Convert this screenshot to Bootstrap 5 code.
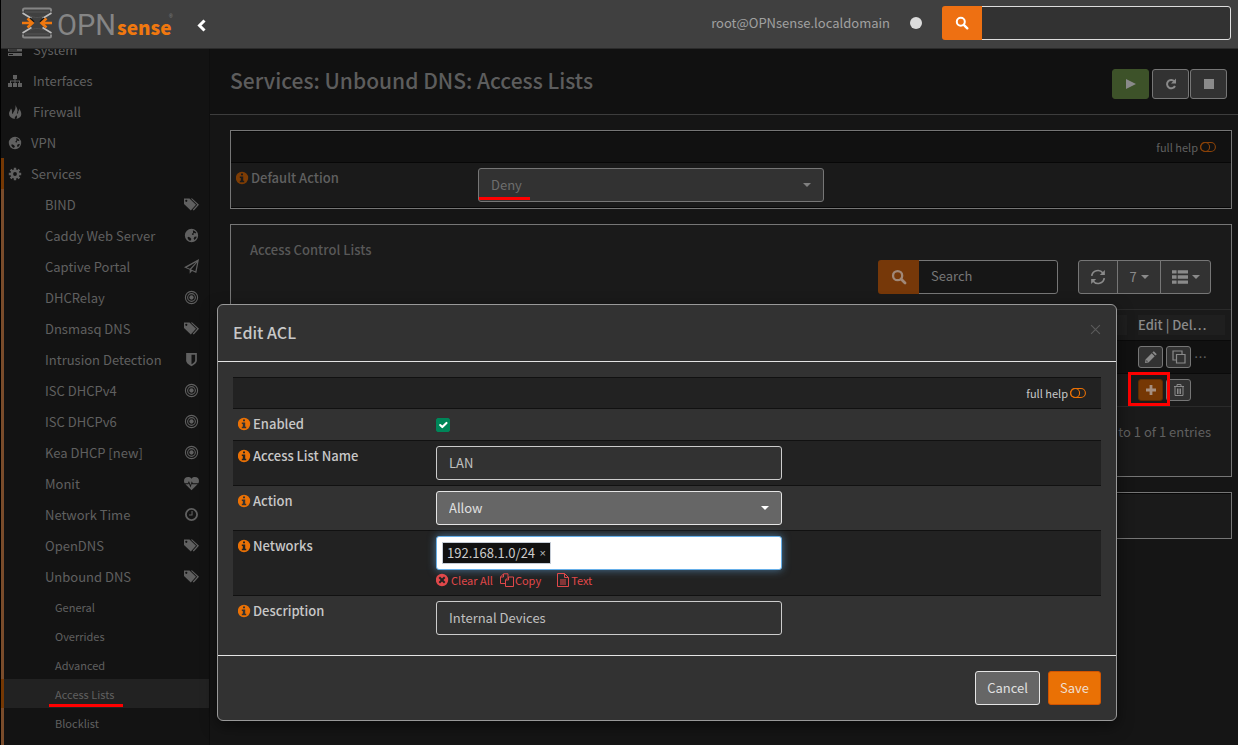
<!DOCTYPE html>
<html lang="en">
<head>
<meta charset="utf-8">
<meta name="viewport" content="width=device-width, initial-scale=1">
<title>Access Lists | Unbound DNS | Services</title>
<link rel="stylesheet" href="https://cdn.jsdelivr.net/npm/bootstrap@5.3.0/dist/css/bootstrap.min.css">
<style>
:root { --fs: 13px; --fs-sm: 11px; --orange: #ea7105; --dim-orange: #753804; --dim-line: #767676; }
body { font-family: "Noto Sans CJK SC", "Source Sans Pro", sans-serif; font-size: var(--fs); line-height: 20px; background: #151515; color: #606060; min-height: 100vh; overflow: hidden; border-left: 1px solid #000; }
a { color: inherit; text-decoration: none; }
.ico { width: 14px; height: 14px; fill: currentColor; flex: none; display: block; }
.btn, .form-control, .form-select { font-size: var(--fs); line-height: 20px; border-radius: 3px; padding: 6px 12px; }
.form-control { padding: 5px 12px 7px; }

/* top bar */
.topbar { height: 49px; background: #404040; border-bottom: 1px solid #2b2b2b; z-index: 5; padding: 0 7px 2px 20px; }
.topbar .user { color: #a0a0a0; }
.status-dot { width: 12px; height: 12px; background: #dcdcdc; margin: 0 20px; }
.top-search { width: 289px; }
.top-search .btn { background: #ee7012; color: #fff; width: 40px; padding: 0; }
.top-search .form-control { background: #323232; border: 1px solid #ddd; color: #ccc; }

/* side menu */
.sidebar { width: 209px; background: #131313; border-right: 1px solid #0e0e0e; overflow: hidden; }
.menu { margin-top: -15px; }
.menu a { display: flex; align-items: center; height: 31px; padding-left: 7px; gap: 9px; }
.menu .deep { padding-left: 2px; }
.menu .sub a { padding: 0 10px 0 41px; justify-content: space-between; }
.menu .sub .ico { width: 15px; height: 15px; }
.menu .subsub a { height: 29px; padding-left: 51px; font-size: var(--fs-sm); }
.menu .services > a { border-left: 3px solid var(--dim-orange); padding-left: 4px; }
.menu .sub { border-left: 3px solid #7a4c2b; }
.menu .sub a { border: 0; }
.menu .subsub a.current { background: #222; border-left: 3px solid var(--dim-orange); margin-left: -3px; }

/* page */
.page-head { background: #111; border-bottom: 1px solid #3d3d3d; height: 66px; padding: 0 11px 0 20px; }
.page-head h1 { font-size: 21px; font-weight: 500; line-height: 24px; color: #5d5d5d; padding-bottom: 3px; }
.dim-btn { background: #323232; border: 1px solid var(--dim-line); color: #8a8a8a; }
.head-btn { width: 37px; height: 30px; padding: 0; margin-left: 1px; }
.head-btn.play { background: #3d5229; border-color: #3d5229; margin-right: 2px; }
.page-body { padding: 15px 6px 0 20px; }
.box { border: 1px solid var(--dim-line); background: #1a1a1a; margin-bottom: 15px; }
.box .help-row { background: #111; border-top: 1px solid #070707; border-bottom: 1px solid #070707; }
.box .form-row { border-bottom: 1px solid #070707; }
.help-row { height: 32px; padding: 0 15px; gap: 2px; font-size: var(--fs-sm); }
.toggle { width: 16px; height: 12px; }
.form-row { display: flex; padding: 5px; }
.form-row .form-label { font-weight: 500; margin: 0; display: flex; gap: 1px; align-items: center; height: 20px; }
.form-row .ctl { width: 346px; }
.lbl-page { width: 242px; }
.lbl-dialog { width: 198px; }
.dim-select { background-color: #323232; border: 1px solid var(--dim-line); color: #6e6e6e; }
.caret-select { appearance: none; background-repeat: no-repeat; background-position: right 12px center; background-size: 8px 4px; height: 34px; padding-right: 30px; }
.caret-dim { background-image: url("data:image/svg+xml,%3Csvg xmlns='http://www.w3.org/2000/svg' viewBox='0 0 8 4'%3E%3Cpath fill='%23808080' d='M0 0h8L4 4z'/%3E%3C/svg%3E"); }
.caret-lit { background-image: url("data:image/svg+xml,%3Csvg xmlns='http://www.w3.org/2000/svg' viewBox='0 0 8 4'%3E%3Cpath fill='%23ffffff' d='M0 0h8L4 4z'/%3E%3C/svg%3E"); }
.caret { width: 8px; height: 4px; fill: currentColor; }

.grid-title { padding: 15px 19px 0; font-weight: 500; color: #585858; }
.grid-tools { gap: 20px; padding-right: 20px; margin-bottom: 15px; }
.grid-tools .btn-group .btn { width: 44px; padding: 0; }
.grid-tools .btn-group .btn:first-child { width: 40px; }
.grid-tools .btn-group .btn:last-child { width: 51px; }
.grid-tools .ico { width: 16px; height: 16px; }
.grid-search { width: 180px; height: 34px; }
.grid-search .btn { background: #763809; color: #a08878; width: 41px; padding: 0; }
.grid-search .form-control { background: #161616; border: 1px solid var(--dim-line); color: #777; }
.grid-search .form-control::placeholder { color: #777; }
.acl-grid { width: 100%; table-layout: fixed; border-collapse: collapse; }
.acl-grid th, .acl-grid td { height: 33px; padding: 0 6px 0 5px; border-top: 1px solid #0a0a0a; vertical-align: middle; }
.acl-grid thead th { height: 31px; border-top: 1px solid #2a2a2a; }
.acl-grid th span { display: block; background: #1f1f1f; height: 20px; color: #8a8a8a; font-weight: 500; }
.acl-grid tbody tr:first-child td { background: #111; }
.acl-grid tbody tr:last-child td { border-bottom: 1px solid #2a2a2a; }
.acl-grid .cmd { width: 98px; }
.cmds { gap: 3px; }
.mini { width: 25px; height: 22px; padding: 0; border-radius: 3px; }
.mini.add { background: #763804; border-color: #5e2b00; color: #a58f80; }
.icon-center { display: inline-flex; align-items: center; justify-content: center; }
.entries { padding: 15px 20px 10px; }
.apply-bar { height: 45px; border-top: 1px solid #070707; }

/* dialog */
.acl-dialog { position: absolute; left: 217px; top: 304px; width: 900px; z-index: 10; }
.acl-dialog .modal-content { background: #323232; border: 1px solid #999; border-radius: 6px; color: #c8c8c8; box-shadow: 0 5px 15px rgba(0,0,0,.5); }
.acl-dialog .modal-header { border-bottom: 1px solid #e5e5e5; padding: 0 15px 2px; height: 57px; }
.acl-dialog .modal-title { font-size: 16px; line-height: 24px; font-weight: 500; }
.acl-dialog .dismiss { border: 0; background: none; padding: 0 0 6px; color: #5b5b5b; }
.acl-dialog .modal-body { padding: 15px; }
.acl-dialog .modal-footer { border-top: 1px solid #e5e5e5; padding: 15px; gap: 8px; }
.acl-dialog .modal-footer > * { margin: 0; height: 34px; padding: 6px 11px; }
.acl-dialog .form-row, .acl-dialog .help-row { border-top: 1px solid #111; }
.acl-dialog .help-row { height: 31px; background: #222; }
.acl-dialog .form-row:nth-child(odd) { background: #222; }
.acl-dialog .form-control { background: #323232; border: 1px solid #ccc; color: #c0c0c0; height: 34px; }
.acl-dialog .lit { background-color: #666; border: 1px solid #e5e5e5; color: #e0e0e0; }
.acl-dialog .form-label .ico, .orange { color: var(--orange); }
.acl-dialog .form-check-input { width: 14px; height: 14px; margin: 4px 0 3px; border-radius: 2px; }
.acl-dialog .form-check-input:checked { background-color: #008659; border-color: #008659; background-size: 14px; }
.acl-dialog .tokens { background: #fff; border-color: #66afe9; box-shadow: 0 0 8px rgba(102,175,233,.6); padding: 5px; display: flex; }
.acl-dialog .tokens input { border: 0; outline: 0; background: none; flex: 1; min-width: 0; }
.token { background: #111; border: 1px solid #c5ccd6; color: #ccc; padding: 0 4px; height: 22px; gap: 4px; }
.token button { border: 0; background: none; color: #bbb; padding: 0; width: 7px; font-family: "Liberation Sans", sans-serif; font-size: var(--fs-sm); }
.token-links { font-size: var(--fs-sm); color: #e0484a; gap: 7px; }
.token-links a { gap: 1px; }
.btn-save { background: #ea7105; border: 1px solid #d35400; color: #f0dfd0; }

/* red highlights */
.mark-line { position: absolute; height: 3px; background: #f00; }
.mark-frame { position: absolute; left: -10px; top: -7px; width: 42px; height: 34px; border: 3px solid #f00; pointer-events: none; }
</style>
</head>
<body class="d-flex flex-column">
<svg class="d-none" xmlns="http://www.w3.org/2000/svg">
  <symbol id="server" viewBox="0 0 14 14"><path fill-rule="evenodd" d="M0 1h14v3H0zM0 5.500h14v3H0zM0 10h14v3H0zM1 2v1h5V2zM1 6.500v1h8v-1zM1 11v1h4v-1z"/></symbol>
  <symbol id="sitemap" viewBox="0 0 14 14"><path d="M5 1h4v4H7.500v1.500H12V9h2v4h-4V9h1V7.500H7.500V9H9v4H5V9h1.500V7.500H3V9h1v4H0V9h2V6.500h4.500V5H5z"/></symbol>
  <symbol id="fire" viewBox="0 0 14 14"><path d="M7.500 0c.8 2.500 2 3 2 5.500 0 1.500-.7 2.500-.5 3.500.8-.3 1.500-1.500 1.300-3C11.500 5.500 11.300 4.500 11 3.500c1.300 1.500 2.300 3.300 2.300 5.500 0 2.800-2 4.500-5 4.900 1-1.200 1-2.400.2-3.600-.7 1-2 1.500-1.800 3.600C3 13.500 1 11.300 1 8.500 1 6.500 2.500 5.500 3 3.500c.7.700 1.200 2 1 3.500-.2 1 .3 1.800 1 2 0-2.500 3-3.500 2.500-9z"/></symbol>
  <symbol id="globe" viewBox="0 0 14 14"><path fill-rule="evenodd" d="M7 .8a6.200 6.200 0 1 0 0 12.400A6.200 6.200 0 0 0 7 .8zM8.300 2c1.500.4 2.600 1.300 3.200 2.500l-1.100.6-.8-.7-.8.800.3 1-1.200.3L7.300 5.500l1.200-1zM3.200 9 4 8.200l1.700.7 1.200 1.300L6 12C4.600 11.600 3.700 10.500 3.200 9zM9.800 8.200l1.700-.3.300.5c-.4 1.300-1 2-2.200 2.700L9 9.800z"/></symbol>
  <symbol id="gear" viewBox="0 0 14 14"><circle cx="7" cy="7" r="3.200" fill="none" stroke="currentColor" stroke-width="2.600"/><g stroke="currentColor" stroke-width="2.400"><path d="M7 .8v2.700M7 10.500v2.700M.8 7h2.700M10.500 7h2.700M2.600 2.600l1.900 1.900M9.500 9.500l1.900 1.900M2.600 11.400l1.900-1.900M9.500 4.500l1.900-1.900"/></g></symbol>
  <symbol id="tags" viewBox="0 0 15 13"><path fill-rule="evenodd" d="M0 .5h5.500l6.500 6.300-5.200 5.700L0 6zM2.300 1.700a1.100 1.100 0 1 0 0 2.200 1.100 1.100 0 0 0 0-2.200z"/><path d="M6.800.5h1.400L15 6.800l-5.200 5.700-1.100-.8 4.500-4.900z"/></symbol>
  <symbol id="plane" viewBox="0 0 14 14"><path fill-rule="evenodd" d="M14 0 11.500 13 7.500 11.200 5.300 13.700V10L0 7.800zM11.500 2.800 2.500 7.900l3 1.300zM12.300 3.200 6.600 9.800l4 1.700z"/></symbol>
  <symbol id="target" viewBox="0 0 14 14"><g fill="none" stroke="currentColor"><circle cx="7" cy="7" r="5.700"/><circle cx="7" cy="7" r="3.600"/></g><circle cx="7" cy="7" r="2"/></symbol>
  <symbol id="shield" viewBox="0 0 14 14"><path fill-rule="evenodd" d="M2 1h10v7c0 2.500-3 4.300-5 5.300C5 12.300 2 10.500 2 8zM7 2.600v8.800c1.700-.9 3.400-2.100 3.400-3.500V2.600z"/></symbol>
  <symbol id="heart" viewBox="0 0 14 14"><path d="M7 2.600C6 1.300 5 1 3.800 1 1.500 1 0 2.500 0 4.600c0 .8.200 1.500.6 2.100h3l1-2 1.500 3.800L7.300 5l.9 1.700h5.200c.4-.6.600-1.300.6-2.100C14 2.500 12.500 1 10.200 1 9 1 8 1.300 7 2.600zM1.300 7.700 7 13.200l5.700-5.500H7.600L7.300 7l-1.200 3.700L4.500 6.800l-.4.900z"/></symbol>
  <symbol id="clock" viewBox="0 0 14 14"><circle cx="7" cy="7" r="5.200" fill="none" stroke="currentColor" stroke-width="1.700"/><path d="M7 3.800h1V8H4.700V7H7z"/></symbol>
  <symbol id="search" viewBox="0 0 14 14"><circle cx="5.800" cy="5.800" r="4" fill="none" stroke="currentColor" stroke-width="2"/><path d="m8.800 8.800 3.500 3.500" stroke="currentColor" stroke-width="2.400" stroke-linecap="round"/></symbol>
  <symbol id="info" viewBox="0 0 14 14"><path fill-rule="evenodd" d="M6 .8a6.200 6.200 0 1 0 0 12.400A6.200 6.200 0 0 0 6 .8zM5 2.500h2v1.800H5zM3.800 5.500H7.200v4.300h1v1.500H3.800V9.800h1V7h-1z"/></symbol>
  <symbol id="toggle" viewBox="0 0 16 12"><rect x=".6" y="1.500" width="14.800" height="9" rx="4.500" fill="none" stroke="currentColor" stroke-width="1.100"/><circle cx="5.100" cy="6" r="4.500" fill="none" stroke="currentColor" stroke-width="1.100"/></symbol>
  <symbol id="redo" viewBox="0 0 14 14"><path d="M10.300 4.200A4.200 4.200 0 1 0 11 9" fill="none" stroke="currentColor" stroke-width="2"/><path d="M12 1.500V6.500H7z"/></symbol>
  <symbol id="refresh" viewBox="0 0 14 14"><path d="M1.500 6A5.500 5.500 0 0 1 11.300 3.500M12.500 8A5.500 5.500 0 0 1 2.700 10.500" fill="none" stroke="currentColor" stroke-width="1.500"/><path d="M13 .8v4.400H8.600zM1 13.200V8.800h4.400z"/></symbol>
  <symbol id="list" viewBox="0 0 14 14"><path d="M0 1h4v3H0zM5 1h9v3H5zM0 5.500h4v3H0zM5 5.500h9v3H5zM0 10h4v3H0zM5 10h9v3H5z"/></symbol>
  <symbol id="pencil" viewBox="0 0 14 14"><path fill-rule="evenodd" d="m9.800 1.200 3 3-1.400 1.400-3-3zM7.700 3.300l3 3-6.200 6.200-3.500.5.500-3.500zM2.600 10l-.3 1.700 1.700-.3z"/></symbol>
  <symbol id="clone" viewBox="0 0 14 14"><path d="M4.500 4.500h8.500V13H4.500zM10 4V1H1v9h3" fill="none" stroke="currentColor" stroke-width="1.200"/></symbol>
  <symbol id="plus" viewBox="0 0 14 14"><path d="M5.600 2h2.800v3.600H12v2.800H8.400V12H5.600V8.400H2V5.600h3.600z"/></symbol>
  <symbol id="trash" viewBox="0 0 14 14"><path d="M2 3.500h10M3 3.500V12.500h8V3.500M5 3.500V1.500h4v2M5.500 5.500V11M7 5.500V11M8.500 5.500V11" fill="none" stroke="currentColor"/></symbol>
  <symbol id="xcircle" viewBox="0 0 14 14"><path fill-rule="evenodd" d="M6 .8a6.200 6.200 0 1 0 0 12.400A6.200 6.200 0 0 0 6 .8zM4 3.600l2 2 2-2L9.400 5l-2 2 2 2L8 10.400l-2-2-2 2L2.600 9l2-2-2-2z"/></symbol>
  <symbol id="files" viewBox="0 0 14 14"><path d="M5.500 10.500h-5V4L3.500.8H8V4M3.500 1v3h-3M5.500 7 8.500 4h5v9.500h-8zM8.500 4v3h-3" fill="none" stroke="currentColor"/></symbol>
  <symbol id="file" viewBox="0 0 14 14"><path d="M1.500.5h7l4 4v9h-11zM8.500.5v4h4M4 7h6M4 9h6M4 11h6" fill="none" stroke="currentColor"/></symbol>
</svg>

<header class="topbar d-flex align-items-center position-relative">
  <a href="#" aria-label="OPNsense">
    <svg class="d-block overflow-visible" width="152" height="34" viewBox="0 0 152 34">
      <g fill="none">
        <path d="M2 5.500V4q0-1.500 1.500-1.500h25Q30 2.500 30 4v1.500M2 28.500V30q0 1.500 1.500 1.500h25Q30 31.500 30 30v-1.500" stroke="#858585" stroke-width="2"/>
        <path d="M4 6h24M4 28h24" stroke="#555"/>
        <path d="M9 10c5 2 9 2 14 0M9 24c5-2 9-2 14 0" stroke="#505050"/>
        <path d="M1.500 7l9 5.500M30.500 7l-9 5.500M1.500 27l9-5.500M30.500 27l-9-5.500" stroke="#bdbdbd" stroke-width="1.600"/>
        <path d="M9 12l4 4M23 12l-4 4" stroke="#151515" stroke-width="1.600"/>
        <path d="M1 17h9.500M6.500 12.500l5 4.500-5 4.500M31 17h-9.500M25.500 12.500l-5 4.500 5 4.500" stroke="#f0780f" stroke-width="2.600"/>
      </g>
      <text x="36" y="29" font-family="Roboto, sans-serif" font-weight="400" font-size="29" fill="#858585">OPN</text>
      <text x="96" y="29" font-family="Noto Sans CJK SC, sans-serif" font-weight="900" font-size="19" fill="#f0780f">sense</text>
      <text x="148" y="12" font-family="Liberation Sans, sans-serif" font-size="5" fill="#858585">®</text>
    </svg>
  </a>
  <button class="btn p-0 pt-1 border-0 ms-4" type="button" aria-label="Collapse menu"><svg width="10" height="14" viewBox="0 0 10 14" class="d-block"><path d="M7.500 2.500 2.500 7.500l5 5" fill="none" stroke="#fff" stroke-width="3"/></svg></button>
  <span class="user ms-auto">root@OPNsense.localdomain</span>
  <span class="status-dot rounded-circle"></span>
  <form class="top-search input-group">
    <button class="btn icon-center" type="button" aria-label="Search"><svg class="ico"><use href="#search"/></svg></button>
    <input class="form-control" type="text" aria-label="Search pages">
  </form>
</header>

<div class="d-flex flex-grow-1">
  <nav class="sidebar flex-shrink-0">
    <ul class="menu list-unstyled mb-0">
      <li><a href="#"><svg class="ico"><use href="#server"/></svg><span class="deep">System</span></a></li>
      <li><a href="#"><svg class="ico"><use href="#sitemap"/></svg><span class="deep">Interfaces</span></a></li>
      <li><a href="#"><svg class="ico"><use href="#fire"/></svg><span class="deep">Firewall</span></a></li>
      <li><a href="#"><svg class="ico"><use href="#globe"/></svg>VPN</a></li>
      <li class="services"><a href="#"><svg class="ico"><use href="#gear"/></svg>Services</a>
        <ul class="sub list-unstyled">
          <li><a href="#">BIND<svg class="ico"><use href="#tags"/></svg></a></li>
          <li><a href="#">Caddy Web Server<svg class="ico"><use href="#globe"/></svg></a></li>
          <li><a href="#">Captive Portal<svg class="ico"><use href="#plane"/></svg></a></li>
          <li><a href="#">DHCRelay<svg class="ico"><use href="#target"/></svg></a></li>
          <li><a href="#">Dnsmasq DNS<svg class="ico"><use href="#tags"/></svg></a></li>
          <li><a href="#">Intrusion Detection<svg class="ico"><use href="#shield"/></svg></a></li>
          <li><a href="#">ISC DHCPv4<svg class="ico"><use href="#target"/></svg></a></li>
          <li><a href="#">ISC DHCPv6<svg class="ico"><use href="#target"/></svg></a></li>
          <li><a href="#">Kea DHCP [new]<svg class="ico"><use href="#target"/></svg></a></li>
          <li><a href="#">Monit<svg class="ico"><use href="#heart"/></svg></a></li>
          <li><a href="#">Network Time<svg class="ico"><use href="#clock"/></svg></a></li>
          <li><a href="#">OpenDNS<svg class="ico"><use href="#tags"/></svg></a></li>
          <li><a href="#">Unbound DNS<svg class="ico"><use href="#tags"/></svg></a>
            <ul class="subsub list-unstyled pb-4">
              <li><a href="#">General</a></li>
              <li><a href="#">Overrides</a></li>
              <li><a href="#">Advanced</a></li>
              <li class="position-relative"><a href="#" class="current">Access Lists</a><span class="mark-line" style="left:45px;bottom:1px;width:74px"></span></li>
              <li><a href="#">Blocklist</a></li>
            </ul>
          </li>
        </ul>
      </li>
    </ul>
  </nav>

  <main class="flex-grow-1">
    <div class="page-head d-flex align-items-center">
      <h1 class="mb-0 me-auto">Services: Unbound DNS: Access Lists</h1>
      <div class="d-flex pt-1">
        <button class="btn head-btn dim-btn play icon-center" type="button" aria-label="Start"><svg class="ico"><path d="M2 2l10 5-10 5z"/></svg></button>
        <button class="btn head-btn dim-btn icon-center" type="button" aria-label="Restart"><svg class="ico"><use href="#redo"/></svg></button>
        <button class="btn head-btn dim-btn icon-center" type="button" aria-label="Stop"><svg class="ico"><path d="M2 2h10v10H2z"/></svg></button>
      </div>
    </div>

    <div class="page-body">
      <section class="box">
        <div class="help-row d-flex align-items-center justify-content-end">full help <svg class="toggle" color="#8a4208"><use href="#toggle"/></svg></div>
        <div class="form-row">
          <div class="lbl-page"><label class="form-label" for="def"><svg class="ico" color="#7d3c04"><use href="#info"/></svg>Default Action</label></div>
          <div class="ctl position-relative">
            <select id="def" class="form-select dim-select caret-select caret-dim"><option>Deny</option></select>
            <span class="mark-line" style="left:1px;bottom:2px;width:51px"></span>
          </div>
        </div>
      </section>

      <section class="box pb-4">
        <div class="grid-title">Access Control Lists</div>
        <div class="grid-tools d-flex justify-content-end">
          <form class="grid-search input-group flex-nowrap">
            <button class="btn icon-center" type="button" aria-label="Search"><svg class="ico"><use href="#search"/></svg></button>
            <input class="form-control" type="text" placeholder="Search" aria-label="Search lists">
          </form>
          <div class="btn-group">
            <button class="btn dim-btn icon-center" type="button" aria-label="Refresh"><svg class="ico"><use href="#refresh"/></svg></button>
            <button class="btn dim-btn icon-center gap-1" type="button">7<svg class="caret"><path d="M0 0h8L4 4z"/></svg></button>
            <button class="btn dim-btn icon-center gap-1" type="button" aria-label="Columns"><svg class="ico"><use href="#list"/></svg><svg class="caret"><path d="M0 0h8L4 4z"/></svg></button>
          </div>
        </div>
        <table class="acl-grid">
          <thead><tr><th><span></span></th><th class="cmd"><span>Edit | Del…</span></th></tr></thead>
          <tbody>
            <tr><td></td><td><div class="cmds d-flex align-items-center">
              <button class="btn mini dim-btn icon-center" type="button" aria-label="Edit"><svg class="ico"><use href="#pencil"/></svg></button>
              <button class="btn mini dim-btn icon-center" type="button" aria-label="Clone"><svg class="ico"><use href="#clone"/></svg></button>…</div></td></tr>
            <tr><td></td><td><div class="cmds d-flex position-relative">
              <button class="btn mini dim-btn add icon-center" type="button" aria-label="Add"><svg class="ico"><use href="#plus"/></svg></button>
              <button class="btn mini dim-btn icon-center" type="button" aria-label="Delete selected"><svg class="ico"><use href="#trash"/></svg></button>
              <span class="mark-frame"></span></div></td></tr>
          </tbody>
        </table>
        <div class="entries text-end">Showing 1 to 1 of 1 entries</div>
      </section>

      <section class="box" aria-label="Apply"><div class="apply-bar"></div></section>
    </div>
  </main>
</div>

<div class="acl-dialog" role="dialog" aria-labelledby="dlg-title">
  <div class="modal-content">
    <div class="modal-header d-flex justify-content-between align-items-center">
      <h2 class="modal-title" id="dlg-title">Edit ACL</h2>
      <button class="dismiss" type="button" aria-label="Close"><svg width="11" height="11" viewBox="0 0 10 10" class="d-block"><path d="m1 1 8 8M9 1 1 9" stroke="currentColor"/></svg></button>
    </div>
    <div class="modal-body">
      <div class="help-row d-flex align-items-center justify-content-end">full help <svg class="toggle orange"><use href="#toggle"/></svg></div>
      <div class="form-row">
        <div class="lbl-dialog"><label class="form-label" for="en"><svg class="ico"><use href="#info"/></svg>Enabled</label></div>
        <div class="ctl d-flex"><input class="form-check-input" type="checkbox" id="en" checked></div>
      </div>
      <div class="form-row">
        <div class="lbl-dialog"><label class="form-label" for="nm"><svg class="ico"><use href="#info"/></svg>Access List Name</label></div>
        <div class="ctl"><input class="form-control" type="text" id="nm" value="LAN"></div>
      </div>
      <div class="form-row">
        <div class="lbl-dialog"><label class="form-label" for="ac"><svg class="ico"><use href="#info"/></svg>Action</label></div>
        <div class="ctl"><select id="ac" class="form-select lit caret-select caret-lit"><option>Allow</option></select></div>
      </div>
      <div class="form-row">
        <div class="lbl-dialog"><label class="form-label" for="nw"><svg class="ico"><use href="#info"/></svg>Networks</label></div>
        <div class="ctl">
          <div class="form-control tokens"><span class="token d-flex align-items-center">192.168.1.0/24<button type="button" aria-label="Remove">×</button></span><input type="text" id="nw"></div>
          <div class="token-links d-flex">
            <a href="#" class="d-flex align-items-center"><svg class="ico"><use href="#xcircle"/></svg>Clear All</a>
            <a href="#" class="d-flex align-items-center me-2"><svg class="ico"><use href="#files"/></svg>Copy</a>
            <a href="#" class="d-flex align-items-center"><svg class="ico"><use href="#file"/></svg>Text</a>
          </div>
        </div>
      </div>
      <div class="form-row">
        <div class="lbl-dialog"><label class="form-label" for="ds"><svg class="ico"><use href="#info"/></svg>Description</label></div>
        <div class="ctl"><input class="form-control" type="text" id="ds" value="Internal Devices"></div>
      </div>
    </div>
    <div class="modal-footer">
      <button class="btn lit" type="button">Cancel</button>
      <button class="btn btn-save" type="button">Save</button>
    </div>
  </div>
</div>
<script src="https://cdn.jsdelivr.net/npm/bootstrap@5.3.0/dist/js/bootstrap.bundle.min.js"></script>
</body>
</html>
